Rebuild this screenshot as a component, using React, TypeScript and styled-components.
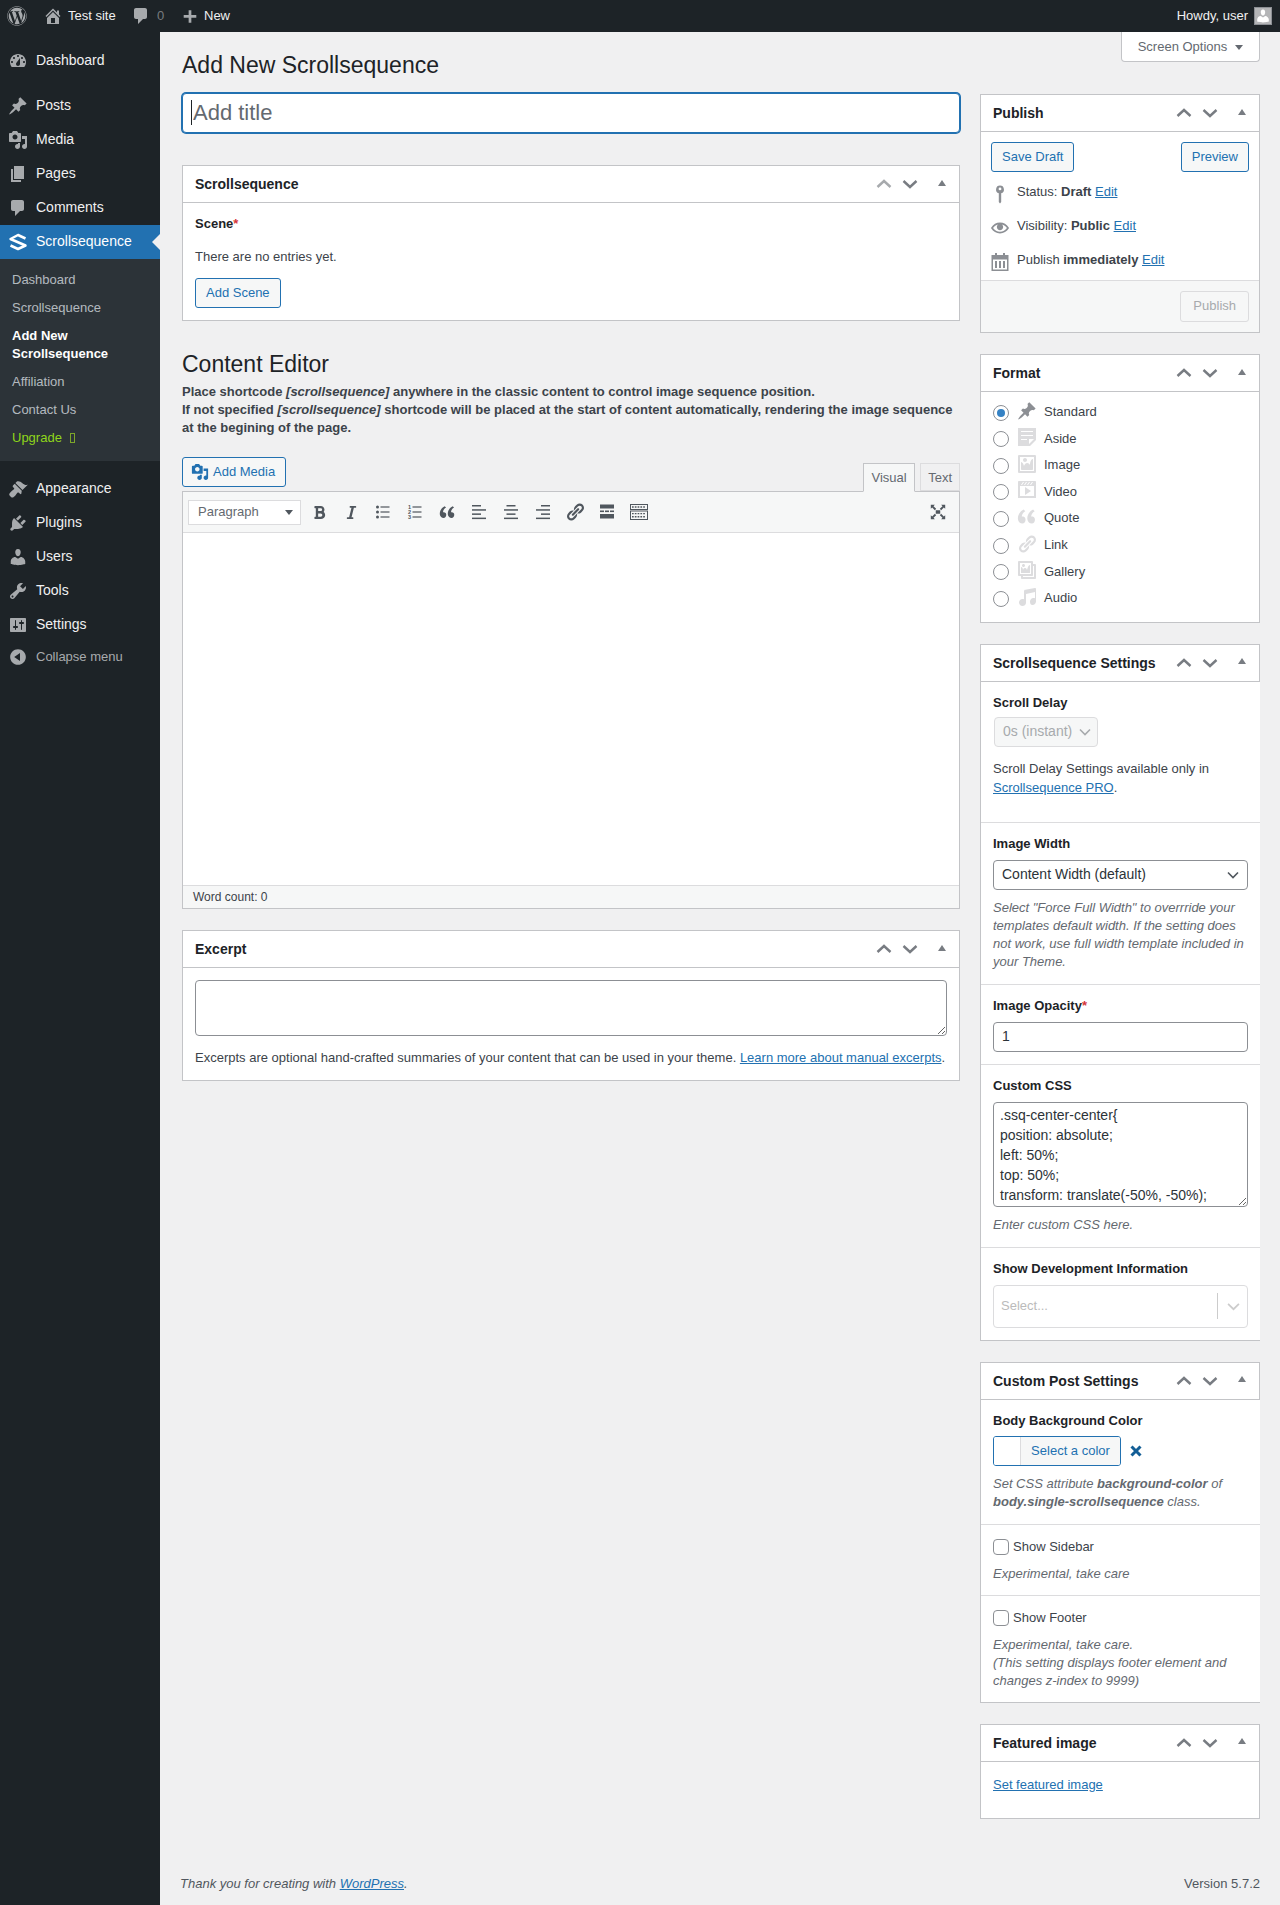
// App.tsx
import styled, { createGlobalStyle } from "styled-components";
import { FaWordpress, FaBold, FaItalic } from "react-icons/fa";

/* --------------------------
    TOKENS
--------------------------- */
const DARK = "#1d2327";
const SUBMENU = "#2c3338";
const BLUE = "#2271b1";
const LINK = "#2271b1";
const BORDER = "#c3c4c7";
const LIGHT = "#dcdcde";
const TEXT = "#3c434a";
const MUTED = "#646970";
const GREY = "#a7aaad";

/* --------------------------
    DASHICON PATHS
--------------------------- */
const ICONS: Record<string, string> = {
  dashboard:
    "M3.76 16h12.48c1.1-1.37 1.76-3.11 1.76-5 0-4.42-3.58-8-8-8s-8 3.58-8 8c0 1.89.66 3.63 1.76 5zM10 4c.55 0 1 .45 1 1s-.45 1-1 1-1-.45-1-1 .45-1 1-1zM6 6c.55 0 1 .45 1 1s-.45 1-1 1-1-.45-1-1 .45-1 1-1zm8 0c.55 0 1 .45 1 1s-.45 1-1 1-1-.45-1-1 .45-1 1-1zm-5.37 5.55L12 7v6c0 1.1-.9 2-2 2s-2-.9-2-2c0-.57.24-1.08.63-1.45zM4 10c.55 0 1 .45 1 1s-.45 1-1 1-1-.45-1-1 .45-1 1-1zm12 0c.55 0 1 .45 1 1s-.45 1-1 1-1-.45-1-1 .45-1 1-1z",
  pin: "M10.44 3.02l1.82-1.82 6.36 6.35-1.83 1.82c-1.05-.68-2.48-.57-3.41.36l-.75.75c-.92.93-1.04 2.35-.35 3.41l-1.83 1.82-2.41-2.41-2.8 2.79c-.42.42-3.38 2.71-3.8 2.29s1.86-3.39 2.28-3.81l2.79-2.79L4.1 9.36l1.83-1.82c1.05.69 2.48.57 3.4-.36l.75-.75c.93-.92 1.05-2.35.36-3.41z",
  media:
    "M13 11V4c0-.55-.45-1-1-1h-1.67L9 1H5L3.67 3H2c-.55 0-1 .45-1 1v7c0 .55.45 1 1 1h10c.55 0 1-.45 1-1zM7 4.5c1.38 0 2.5 1.12 2.5 2.5S8.38 9.5 7 9.5 4.5 8.38 4.5 7 5.62 4.5 7 4.5zM14 6h5v10.5c0 1.38-1.12 2.5-2.5 2.5S14 17.88 14 16.5s1.12-2.5 2.5-2.5c.17 0 .34.02.5.05V9h-3V6zm-4 8.05V13h2v3.5c0 1.38-1.12 2.5-2.5 2.5S7 17.88 7 16.5 8.12 14 9.5 14c.17 0 .34.02.5.05z",
  page: "M6 15V2h10v13H6zm-1 1h8v2H3V5h2v11z",
  comment:
    "M5 2h9c1.1 0 2 .9 2 2v7c0 1.1-.9 2-2 2h-2l-5 5v-5H5c-1.1 0-2-.9-2-2V4c0-1.1.9-2 2-2z",
  appearance:
    "M14.48 11.06L7.41 3.99l1.5-1.5c.5-.56 2.3-.47 3.51.32 1.21.8 1.43 1.28 2.91 2.1 1.18.64 2.45 1.26 4.45.85zm-.71.71L6.7 4.7 4.93 6.47c-.39.39-.39 1.02 0 1.41l1.06 1.06c.39.39.39 1.03 0 1.42-.6.6-1.43 1.11-2.21 1.69-.35.26-.7.53-1.01.84-1.35 1.34-2.38 2.51-.73 4.16l.71.71c1.65 1.65 2.82.62 4.17-.73.31-.31.58-.66.84-1.01.58-.78 1.09-1.61 1.69-2.21.39-.39 1.03-.39 1.42 0l1.06 1.06c.39.39 1.02.39 1.41 0z",
  plugins:
    "M13.11 4.36L9.87 7.6 8 5.73l3.24-3.24c.35-.34 1.05-.2 1.56.32.52.51.66 1.21.31 1.55zm-8 1.77l.91-1.12 9.01 9.01-1.19.84c-.71.71-2.63 1.16-3.82 1.16H6.14L4.9 17.26c-.59.59-1.54.59-2.12 0-.59-.58-.59-1.53 0-2.12l1.24-1.24v-3.88c0-1.13.4-3.19 1.09-3.89zm7.26 3.97l3.24-3.24c.34-.35 1.04-.21 1.55.31.52.51.66 1.21.31 1.55l-3.24 3.25z",
  users:
    "M10 9.25c-2.27 0-2.73-3.44-2.73-3.44C7 4.02 7.82 2 9.97 2c2.16 0 2.98 2.02 2.71 3.81 0 0-.41 3.44-2.68 3.44zm0 2.57L12.72 10c2.39 0 4.52 2.33 4.52 4.53v2.49s-3.65 1.13-7.24 1.13c-3.65 0-7.24-1.13-7.24-1.13v-2.49c0-2.25 1.94-4.48 4.47-4.48z",
  tools:
    "M16.68 9.77c-1.34 1.34-3.3 1.67-4.95.99l-5.41 6.52c-.99.99-2.59.99-3.58 0s-.99-2.59 0-3.57l6.52-5.42c-.68-1.65-.35-3.61.99-4.95 1.28-1.28 3.12-1.62 4.72-1.06l-2.89 2.89 2.82 2.82 2.86-2.87c.53 1.58.18 3.39-1.08 4.65zM3.81 16.21c.4.39 1.04.39 1.43 0 .4-.4.4-1.04 0-1.43-.39-.4-1.03-.4-1.43 0-.39.39-.39 1.03 0 1.43z",
  settings:
    "M18 16V4c0-.55-.45-1-1-1H3c-.55 0-1 .45-1 1v12c0 .55.45 1 1 1h14c.55 0 1-.45 1-1zM8 11h1c.55 0 1 .45 1 1s-.45 1-1 1H8v1.5c0 .28-.22.5-.5.5s-.5-.22-.5-.5V13H6c-.55 0-1-.45-1-1s.45-1 1-1h1V5.5c0-.28.22-.5.5-.5s.5.22.5.5V11zm5-2h-1c-.55 0-1-.45-1-1s.45-1 1-1h1V5.5c0-.28.22-.5.5-.5s.5.22.5.5V7h1c.55 0 1 .45 1 1s-.45 1-1 1h-1v5.5c0 .28-.22.5-.5.5s-.5-.22-.5-.5V9z",
  collapse:
    "M10 2.16c4.33 0 7.84 3.51 7.84 7.84s-3.51 7.84-7.84 7.84S2.16 14.33 2.16 10 5.71 2.16 10 2.16zm2 11.72V6.12L6.18 9.97z",
  home: "M16 8.5l1.53 1.53-1.06 1.06L10 4.62l-6.47 6.47-1.06-1.06L10 2.5l4 4v-2h2v4zm-6-2.46l6 5.99V18H4v-5.97zM12 17v-5H8v5h4z",
  plus: "M17 9v3h-5.5v5.5h-3V12H3V9h5.5V3.5h3V9z",
  aside:
    "M1 1h18v12l-6 6H1V1zm3 3v1h12V4H4zm0 4v1h12V8H4zm6 5v-1H4v1h6zm2 4l5-5h-5v5z",
  image:
    "M2.25 1h15.5c.69 0 1.25.56 1.25 1.25v15.5c0 .69-.56 1.25-1.25 1.25H2.25C1.56 19 1 18.44 1 17.75V2.25C1 1.56 1.56 1 2.25 1zM17 17V3H3v14h14zM10 6c0-1.1-.9-2-2-2s-2 .9-2 2 .9 2 2 2 2-.9 2-2zm3 5s0-6 3-6v10c0 .55-.45 1-1 1H5c-.55 0-1-.45-1-1V8c2 0 3 4 3 4s1-3 3-3 3 2 3 2z",
  video:
    "M2 1h16c.55 0 1 .45 1 1v16l-18-.02V2c0-.55.45-1 1-1zm4 1L4 5h1l2-3H6zm4 0H9L7 5h1zm3 0h-1l-2 3h1zm3 0h-1l-2 3h1zm1 14V6H3v10h14zM8 7l6 4-6 4V7z",
  quote:
    "M8.54 12.74c0-.87-.24-1.61-.72-2.22-.73-.92-2.14-1.03-2.96-.85-.34-1.93 1.3-4.39 3.42-5.45L6.65 2.5C3.45 4.03.12 8.22 1.11 12.9c.36 1.71 1.96 3.6 4.34 3.6 1.75 0 3.09-1.7 3.09-3.76zm9.41 0c0-.87-.24-1.61-.72-2.22-.73-.92-2.14-1.03-2.96-.85-.34-1.93 1.3-4.39 3.42-5.45L16.06 2.5c-3.2 1.53-6.53 5.72-5.54 10.4.36 1.71 1.96 3.6 4.34 3.6 1.75 0 3.09-1.7 3.09-3.76z",
  link: "M17.74 2.76c1.68 1.69 1.68 4.41 0 6.1l-1.53 1.52c-1.12 1.12-2.7 1.47-4.14 1.09l2.62-2.61.76-.77.76-.76c.84-.84.84-2.2 0-3.04-.84-.85-2.2-.85-3.04 0l-.77.76-3.38 3.38c-.37-1.44-.02-3.02 1.1-4.14l1.52-1.53c1.69-1.68 4.42-1.68 6.1 0zM8.59 13.43l5.34-5.34c.42-.42.42-1.1 0-1.52-.44-.43-1.13-.39-1.53 0l-5.33 5.34c-.42.42-.42 1.1 0 1.52.44.43 1.13.39 1.52 0zm-.76 2.29l4.14-4.15c.38 1.44.03 3.02-1.09 4.14l-1.52 1.53c-1.69 1.68-4.41 1.68-6.1 0-1.68-1.68-1.68-4.42 0-6.1l1.53-1.52c1.12-1.12 2.7-1.47 4.14-1.1l-4.14 4.15c-.85.84-.85 2.2 0 3.05.84.84 2.2.84 3.04 0z",
  gallery:
    "M16 4h1.96c.57 0 1.04.47 1.04 1.04v12.92c0 .57-.47 1.04-1.04 1.04H5.04C4.47 19 4 18.53 4 17.96V16H2.04C1.47 16 1 15.53 1 14.96V2.04C1 1.47 1.47 1 2.04 1h12.92c.57 0 1.04.47 1.04 1.04V4zM3 14h11V3H3v11zm5-8.5C8 4.67 7.33 4 6.5 4S5 4.67 5 5.5 5.67 7 6.5 7 8 6.33 8 5.5zm2 4.5s1-5 3-5v8H4V7c2 0 2 3 2 3s.33-2 2-2 2 2 2 2zm7 7V6h-1v8.96c0 .57-.47 1.04-1.04 1.04H6v1h11z",
  audio:
    "M6.99 3.08l11.02-2c.55-.08.99.45.99 1V14.5c0 1.94-1.57 3.5-3.5 3.5S13 16.44 13 14.5c0-1.93 1.57-3.5 3.5-3.5.54 0 1.04.13 1.5.35V5.08l-9 2V16c-.24 1.7-1.74 3-3.5 3C3.57 19 2 17.44 2 15.5 2 13.57 3.57 12 5.5 12c.54 0 1.04.13 1.5.35V4.08c0-.55.44-.91.99-1z",
  eye: "M19.7 9.4C17.7 6 14 3.9 10 3.9S2.3 6 .3 9.4L0 10l.3.6c2 3.4 5.7 5.5 9.7 5.5s7.7-2.1 9.7-5.5l.3-.6-.3-.6zM10 14.1c-3.1 0-6-1.6-7.7-4.1C3.6 8 5.7 6.6 8 6.1c-.9.6-1.5 1.7-1.5 2.9 0 1.9 1.6 3.5 3.5 3.5s3.5-1.6 3.5-3.5c0-1.2-.6-2.3-1.5-2.9 2.3.5 4.4 1.9 5.7 3.9-1.7 2.5-4.6 4.1-7.7 4.1z",
  key: "M10 1.5a4 4 0 0 1 1.2 7.8V18l-1.2 1.5L8.8 18V9.3A4 4 0 0 1 10 1.5zm0 2a1.4 1.4 0 1 0 0 2.8 1.4 1.4 0 0 0 0-2.8z",
  calendar:
    "M5 1h2v2h6V1h2v2h3.5v16h-17V3H5V1zM3 7.5V17.5h14V7.5H3zm2 1.5h2v7H5V9zm4 0h2v7H9V9zm4 0h2v7h-2V9z",
  fullscreen:
    "M2 2h4.5L5 3.5 8 6.5 6.5 8 3.5 5 2 6.5V2zm16 0v4.5L16.5 5l-3 3L12 6.5l3-3L13.5 2H18zM2 18v-4.5L3.5 15l3-3L8 13.5l-3 3L6.5 18H2zm16 0h-4.5l1.5-1.5-3-3 1.5-1.5 3 3 1.5-1.5V18zM7.5 8h5v4h-5z",
};

/* --------------------------
    GLOBAL
--------------------------- */
const Global = createGlobalStyle`
  html, body { margin: 0; padding: 0; background: #f0f0f1; }
  body {
    font-family: "Liberation Sans", Arial, sans-serif;
    font-size: 13px;
    line-height: 1.4;
    color: ${TEXT};
  }
  * { box-sizing: border-box; }
`;

/* --------------------------
    ADMIN BAR
--------------------------- */
const AdminBar = styled.header`
  height: 32px;
  background: ${DARK};
  display: flex;
  align-items: center;
  justify-content: space-between;
  color: #f0f0f1;
`;

const BarGroup = styled.div`
  display: flex;
  align-items: center;
`;

const BarLogo = styled.span`
  width: 42.5px;
  padding-left: 7px;
  display: flex;
`;

const BarItem = styled.span<{ $w?: number }>`
  display: inline-flex;
  align-items: center;
  gap: 5.5px;
  width: ${(p) => (p.$w ? `${p.$w}px` : "auto")};
  color: #f0f0f1;
  svg { color: ${GREY}; flex: none; }
`;

const BarCount = styled.span`
  color: ${GREY};
  opacity: 0.65;
  margin-left: 1px;
`;

const Avatar = styled.span`
  width: 18px;
  height: 18px;
  margin: 0 8px 0 6px;
  background: #b4b5b7;
  display: inline-flex;
  align-items: flex-end;
  justify-content: center;
  overflow: hidden;
  border: 1px solid #8c8f94;
  svg { color: #fff; display: block; }
`;

const Icon = styled.svg`
  fill: currentColor;
  display: block;
  flex: none;
`;

function Dash({ name, size = 20 }: { name: string; size?: number }) {
  return (
    <Icon width={size} height={size} viewBox="0 0 20 20" aria-hidden>
      <path d={ICONS[name]} fillRule="evenodd" />
    </Icon>
  );
}

/* --------------------------
    SIDEBAR
--------------------------- */
const Shell = styled.div`
  display: flex;
  align-items: stretch;
  height: 1873px;
`;

const Sidebar = styled.nav`
  width: 160px;
  flex: none;
  background: ${DARK};
  padding-top: 12px;
`;

const MenuRow = styled.div<{ $active?: boolean }>`
  position: relative;
  height: 34px;
  display: flex;
  align-items: center;
  gap: 8px;
  padding-left: 8px;
  font-size: 14px;
  color: ${(p) => (p.$active ? "#fff" : "#f0f0f1")};
  background: ${(p) => (p.$active ? BLUE : "transparent")};
  svg { color: ${(p) => (p.$active ? "#fff" : GREY)}; }
`;

const ActiveArrow = styled.span`
  position: absolute;
  right: 0;
  top: 9px;
  border: 8px solid transparent;
  border-right-color: #f0f0f1;
  border-left-width: 0;
`;

const MenuGap = styled.div`
  height: 11px;
`;

const SubMenu = styled.div`
  background: ${SUBMENU};
  padding: 7px 0 9px;
`;

const SubItem = styled.div<{ $current?: boolean; $accent?: boolean }>`
  padding: 5px 12px;
  min-height: 28px;
  line-height: 18px;
  font-size: 13px;
  font-weight: ${(p) => (p.$current ? 700 : 400)};
  color: ${(p) =>
    p.$accent ? "#8fd61a" : p.$current ? "#fff" : "rgba(240,246,252,.7)"};
`;

const Tofu = styled.span`
  display: inline-block;
  width: 5px;
  height: 10px;
  margin-left: 8px;
  border: 1px solid #7da62a;
  vertical-align: -1px;
`;

const CollapseRow = styled.div`
  height: 30px;
  display: flex;
  align-items: center;
  gap: 8px;
  padding-left: 8px;
  color: ${GREY};
  font-size: 13px;
`;

/* --------------------------
    CONTENT
--------------------------- */
const Content = styled.main`
  position: relative;
  flex: 1;
  min-width: 0;
  padding: 19px 20px 0 22px;
  display: flex;
  flex-direction: column;
`;

const ScreenTab = styled.div`
  position: absolute;
  top: 0;
  right: 20px;
  width: 139px;
  height: 30px;
  padding-top: 1px;
  background: #fff;
  border: 1px solid ${BORDER};
  border-top: 0;
  border-radius: 0 0 4px 4px;
  display: flex;
  align-items: center;
  justify-content: center;
  gap: 8px;
  color: ${MUTED};
`;

const DownCaret = styled.span`
  border: 4px solid transparent;
  border-top: 5px solid ${MUTED};
  border-bottom: 0;
`;

const PageTitle = styled.h1`
  margin: 0 0 13px;
  font-size: 23px;
  line-height: 29px;
  font-weight: 400;
  color: ${DARK};
`;

const Columns = styled.div`
  display: grid;
  grid-template-columns: 778px 280px;
  column-gap: 20px;
  align-items: start;
`;

const MainCol = styled.div`
  display: flex;
  flex-direction: column;
`;

const SideCol = styled.aside`
  display: flex;
  flex-direction: column;
  gap: 21px;
  padding-top: 1px;
`;

const TitleWrap = styled.div`
  position: relative;
  margin-bottom: 32px;
`;

const TitleInput = styled.input`
  display: block;
  width: 100%;
  height: 40px;
  padding: 3px 10px;
  border: 1px solid ${BLUE};
  box-shadow: 0 0 0 1px ${BLUE};
  border-radius: 4px;
  background: #fff;
  font: 22px "Liberation Sans", Arial, sans-serif;
  outline: none;
  &::placeholder { color: ${MUTED}; opacity: 1; }
`;

const Caret = styled.span`
  position: absolute;
  left: 9px;
  top: 7px;
  width: 1px;
  height: 25px;
  background: ${DARK};
`;

/* --------------------------
    META BOX
--------------------------- */
const Box = styled.section`
  background: #fff;
  border: 1px solid ${BORDER};
`;

const SpacedBox = styled(Box)`
  margin-top: 21px;
`;

const BoxHead = styled.div`
  height: 37px;
  padding-left: 12px;
  display: flex;
  align-items: center;
  justify-content: space-between;
  border-bottom: 1px solid ${BORDER};
`;

const BoxTitle = styled.h2`
  margin: 0;
  font-size: 14px;
  line-height: 18px;
  font-weight: 700;
  color: ${DARK};
`;

const Handles = styled.div`
  display: flex;
  align-items: center;
  height: 36px;
`;

const Chevron = styled.svg<{ $light?: boolean }>`
  display: block;
  fill: none;
  stroke: ${(p) => (p.$light ? GREY : "#787c82")};
  stroke-width: 2.4;
`;

const HandleSlot = styled.span<{ $w: number }>`
  width: ${(p) => p.$w}px;
  display: flex;
  justify-content: center;
`;

const ToggleTri = styled.span`
  border: 4px solid transparent;
  border-bottom: 6px solid #787c82;
  border-top: 0;
  margin-top: -3px;
`;

function BoxHandles({ upLight }: { upLight?: boolean }) {
  return (
    <Handles>
      <HandleSlot $w={22}>
        <Chevron $light={upLight} width="16" height="10" viewBox="0 0 16 10">
          <path d="M1.5 8 8 2l6.5 6" />
        </Chevron>
      </HandleSlot>
      <HandleSlot $w={30}>
        <Chevron width="16" height="10" viewBox="0 0 16 10">
          <path d="M1.5 2 8 8l6.5-6" />
        </Chevron>
      </HandleSlot>
      <HandleSlot $w={34}>
        <ToggleTri />
      </HandleSlot>
    </Handles>
  );
}

function Head({ title, upLight }: { title: string; upLight?: boolean }) {
  return (
    <BoxHead>
      <BoxTitle>{title}</BoxTitle>
      <BoxHandles upLight={upLight} />
    </BoxHead>
  );
}

const Button = styled.span`
  display: inline-flex;
  align-items: center;
  justify-content: center;
  gap: 4px;
  height: 30px;
  padding: 0 10px;
  border: 1px solid ${BLUE};
  border-radius: 3px;
  background: #f6f7f7;
  color: ${BLUE};
  font-size: 13px;
`;

const PublishButton = styled(Button)`
  height: 31px;
  padding: 0 12px;
  border-color: ${LIGHT};
  color: ${GREY};
`;

const Link = styled.a`
  color: ${LINK};
  text-decoration: underline;
`;

const Req = styled.span`
  color: #d63638;
`;

const ScenePad = styled.div`
  padding: 12px;
`;

const SceneLabel = styled.div`
  font-weight: 700;
  line-height: 18px;
  color: ${DARK};
`;

const EmptyNote = styled.p`
  margin: 15px 0 12px;
  line-height: 18px;
`;

/* --------------------------
    EDITOR
--------------------------- */
const EditorHeading = styled.h2`
  margin: 29px 0 4px;
  font-size: 23px;
  line-height: 29px;
  font-weight: 400;
  color: ${DARK};
`;

const Instructions = styled.p`
  margin: 0 0 20px;
  line-height: 18px;
  font-weight: 700;
`;

const TabRow = styled.div`
  height: 35px;
  display: flex;
  justify-content: space-between;
  align-items: flex-start;
  margin-bottom: -1px;
`;

const TabGroup = styled.div`
  display: flex;
  gap: 5px;
  padding-top: 6px;
`;

const EditorTab = styled.span<{ $on?: boolean }>`
  position: relative;
  height: ${(p) => (p.$on ? 29 : 28)}px;
  padding: 0 ${(p) => (p.$on ? 7.5 : 7)}px;
  border: 1px solid ${(p) => (p.$on ? BORDER : LIGHT)};
  border-bottom-color: ${(p) => (p.$on ? "#f6f7f7" : LIGHT)};
  background: ${(p) => (p.$on ? "#f6f7f7" : "#f0f0f1")};
  color: ${MUTED};
  line-height: 27px;
  z-index: 1;
`;

const Editor = styled.div`
  border: 1px solid ${BORDER};
  display: flex;
  flex-direction: column;
`;

const Toolbar = styled.div`
  height: 41px;
  background: #f6f7f7;
  border-bottom: 1px solid ${LIGHT};
  display: flex;
  align-items: center;
  padding: 0 5px;
`;

const FormatSelect = styled.div`
  width: 113px;
  height: 25px;
  margin-right: 2px;
  padding: 0 7px 0 9px;
  background: #fff;
  border: 1px solid ${LIGHT};
  display: flex;
  align-items: center;
  justify-content: space-between;
  color: ${MUTED};
`;

const SelectCaret = styled.span`
  border: 4px solid transparent;
  border-top: 5px solid #50575e;
  border-bottom: 0;
`;

const ToolButton = styled.span<{ $push?: boolean }>`
  width: 32px;
  height: 30px;
  flex: none;
  display: flex;
  align-items: center;
  justify-content: center;
  color: #50575e;
  margin-left: ${(p) => (p.$push ? "auto" : 0)};
  svg { display: block; }
`;

const EditArea = styled.div`
  height: 352px;
  background: #fff;
`;

const WordCount = styled.div`
  height: 23px;
  padding: 0 10px;
  background: #f6f7f7;
  border-top: 1px solid ${LIGHT};
  font-size: 12px;
  line-height: 22px;
  color: ${TEXT};
`;

const ExcerptBody = styled.div`
  padding: 12px 12px 13px;
`;

const ExcerptArea = styled.textarea`
  display: block;
  width: 100%;
  height: 56px;
  border: 1px solid #8c8f94;
  border-radius: 4px;
  background: #fff;
  outline: none;
`;

const ExcerptNote = styled.p`
  margin: 13px 0 0;
  line-height: 18px;
`;

/* --------------------------
    PUBLISH
--------------------------- */
const ActionRow = styled.div`
  display: flex;
  justify-content: space-between;
  padding: 10px 10px 3px;
`;

const StatusRow = styled.div`
  height: 34px;
  padding: 1px 0 0 10px;
  display: flex;
  align-items: center;
  gap: 8px;
  svg { color: #8c8f94; }
`;

const StatusIcon = styled.span`
  width: 18px;
  display: flex;
  justify-content: center;
  margin-top: 2px;
`;

const PublishFoot = styled.div`
  margin-top: 3px;
  padding: 10px;
  border-top: 1px solid ${LIGHT};
  background: #f6f7f7;
  display: flex;
  justify-content: flex-end;
`;

/* --------------------------
    FORMAT
--------------------------- */
const FormatList = styled.div`
  padding: 7px 12px 10.4px;
`;

const FormatRow = styled.label`
  height: 26.57px;
  display: flex;
  align-items: center;
`;

const Radio = styled.span<{ $on?: boolean }>`
  width: 16px;
  height: 16px;
  flex: none;
  border: 1px solid #8c8f94;
  border-radius: 50%;
  background: #fff;
  display: flex;
  align-items: center;
  justify-content: center;
  margin-top: 1px;
  &::after {
    content: "";
    width: 8px;
    height: 8px;
    border-radius: 50%;
    background: ${(p) => (p.$on ? "#3582c4" : "transparent")};
  }
`;

const FormatIcon = styled.span<{ $on?: boolean }>`
  width: 20px;
  margin: -3px 7px 0 8px;
  color: ${(p) => (p.$on ? "#8c8f94" : LIGHT)};
`;

const FORMATS: [string, string][] = [
  ["Standard", "pin"],
  ["Aside", "aside"],
  ["Image", "image"],
  ["Video", "video"],
  ["Quote", "quote"],
  ["Link", "link"],
  ["Gallery", "gallery"],
  ["Audio", "audio"],
];

/* --------------------------
    ACF FIELDS
--------------------------- */
const FieldBody = styled.div`
  margin-right: -1px;
  background: #fff;
`;

const Field = styled.div<{ $last?: boolean }>`
  padding: 12px;
  border-bottom: ${(p) => (p.$last ? 0 : `1px solid ${LIGHT}`)};
`;

const FieldLabel = styled.div`
  font-weight: 700;
  line-height: 18px;
  color: ${DARK};
  margin-bottom: 7px;
`;

const DelaySelect = styled.div`
  width: 104px;
  height: 30px;
  margin: -2px 0 0 1px;
  padding: 0 6px 0 8px;
  background: #f6f7f7;
  border: 1px solid ${LIGHT};
  border-radius: 4px;
  display: flex;
  align-items: center;
  justify-content: space-between;
  color: ${GREY};
  font-size: 14px;
`;

const DelayNote = styled.p`
  margin: 12px 0 12px;
  line-height: 19.5px;
`;

const FieldSelect = styled.div`
  height: 30px;
  padding: 0 8px;
  background: #fff;
  border: 1px solid #8c8f94;
  border-radius: 4px;
  display: flex;
  align-items: center;
  justify-content: space-between;
  font-size: 14px;
  color: #2c3338;
`;

const Hint = styled.p`
  margin: 9px 0 1px;
  line-height: 18px;
  font-style: italic;
  color: ${MUTED};
  b { font-weight: 700; }
`;

const NumberInput = styled.div`
  height: 30px;
  padding: 0 8px;
  background: #fff;
  border: 1px solid #8c8f94;
  border-radius: 4px;
  display: flex;
  align-items: center;
  font-size: 14px;
  color: #2c3338;
`;

const CssArea = styled.textarea`
  display: block;
  width: 100%;
  height: 105px;
  padding: 2px 6px;
  border: 1px solid #8c8f94;
  border-radius: 4px;
  background: #fff;
  font: 14px/20px "Liberation Sans", Arial, sans-serif;
  color: #2c3338;
  overflow: hidden;
  outline: none;
`;

const DevSelect = styled.div`
  height: 43px;
  padding: 0 7px;
  background: #fff;
  border: 1px solid ${LIGHT};
  border-radius: 4px;
  display: flex;
  align-items: center;
  justify-content: space-between;
  color: #bbb;
`;

const DevRight = styled.span`
  display: flex;
  align-items: center;
  gap: 9px;
`;

const DevBar = styled.span`
  width: 1px;
  height: 26px;
  background: #ccc;
`;

const PickerRow = styled.div`
  display: flex;
  align-items: center;
  gap: 9px;
  margin-top: -1px;
`;

const Picker = styled.div`
  width: 128px;
  height: 30px;
  border: 1px solid ${BLUE};
  border-radius: 3px;
  display: flex;
  overflow: hidden;
`;

const Swatch = styled.span`
  width: 27px;
  background: #fff;
  border-right: 1px solid ${LIGHT};
`;

const PickerText = styled.span`
  flex: 1;
  background: #f6f7f7;
  color: ${BLUE};
  display: flex;
  align-items: center;
  justify-content: center;
`;

const ClearX = styled.svg`
  display: block;
  fill: none;
  stroke: #135e96;
  stroke-width: 3;
`;

const CheckRow = styled.label`
  display: flex;
  align-items: center;
  gap: 4px;
  height: 21px;
  line-height: 18px;
`;

const Check = styled.span`
  width: 16px;
  height: 16px;
  border: 1px solid #8c8f94;
  border-radius: 4px;
  background: #fff;
`;

const CheckHint = styled.p`
  margin: 7px 0 0;
  line-height: 18px;
  font-style: italic;
  color: ${MUTED};
`;

const FeaturedBody = styled.div`
  padding: 13px 12px 24px;
  line-height: 19px;
`;

const Footer = styled.footer`
  margin-top: auto;
  height: 30px;
  display: flex;
  justify-content: space-between;
  margin-left: -2px;
  color: #50575e;
`;

const ThankYou = styled.span`
  font-style: italic;
`;

/* --------------------------
    SMALL DRAWINGS
--------------------------- */
const SmallChevron = ({ color = "#50575e", size = 12 }: { color?: string; size?: number }) => (
  <svg width={size} height={size} viewBox="0 0 12 12" fill="none" stroke={color} strokeWidth="1.6">
    <path d="M1 3.5 6 8.5l5-5" />
  </svg>
);

const ScrollLogo = () => (
  <svg width="20" height="20" viewBox="0 0 20 20" fill="none" stroke="currentColor" strokeWidth="2.5" strokeLinejoin="round">
    <path d="M17.5 6.5 10 3 2.5 7l15 6.5L10 17l-7.5-3.5" />
  </svg>
);

const ToolList = () => (
  <svg width="20" height="20" viewBox="0 0 20 20" fill="currentColor">
    <circle cx="4.5" cy="5" r="1.5" /><circle cx="4.5" cy="10" r="1.5" /><circle cx="4.5" cy="15" r="1.5" />
    <rect x="7.5" y="4.4" width="9" height="1.2" /><rect x="7.5" y="9.4" width="9" height="1.2" /><rect x="7.5" y="14.4" width="9" height="1.2" />
  </svg>
);

const ListDigits = styled.text`
  font: 700 5.5px "Liberation Sans", Arial, sans-serif;
`;

const ToolNumbered = () => (
  <svg width="20" height="20" viewBox="0 0 20 20" fill="currentColor">
    <ListDigits x="3" y="6.5">1</ListDigits>
    <ListDigits x="3" y="11.8">2</ListDigits>
    <ListDigits x="3" y="17">3</ListDigits>
    <rect x="7.5" y="4.4" width="9" height="1.2" /><rect x="7.5" y="9.4" width="9" height="1.2" /><rect x="7.5" y="14.4" width="9" height="1.2" />
  </svg>
);

const ToolAlign = ({ mode }: { mode: "left" | "center" | "right" }) => {
  const x = mode === "left" ? 3 : mode === "center" ? 5.5 : 8;
  return (
    <svg width="20" height="20" viewBox="0 0 20 20" fill="currentColor">
      <rect x={x} y="3" width="9" height="1.5" />
      <rect x="3" y="7.2" width="14" height="1.5" />
      <rect x={x} y="11.4" width="9" height="1.5" />
      <rect x="3" y="15.6" width="14" height="1.5" />
    </svg>
  );
};

const ToolMore = () => (
  <svg width="20" height="20" viewBox="0 0 20 20" fill="currentColor">
    <rect x="3" y="2.5" width="14" height="4" />
    <rect x="3" y="8.5" width="4" height="1.6" /><rect x="8" y="8.5" width="4" height="1.6" /><rect x="13" y="8.5" width="4" height="1.6" />
    <rect x="3" y="12" width="14" height="4.5" />
  </svg>
);

const ToolKitchen = () => (
  <svg width="20" height="20" viewBox="0 0 20 20" fill="none" stroke="currentColor">
    <rect x="1.5" y="2.5" width="17" height="5" strokeWidth="1" />
    <rect x="1.5" y="9" width="17" height="8.5" strokeWidth="1" />
    <path d="M3 5h14M3 11.6h14M3 14.8h14" strokeWidth="1.4" strokeDasharray="1.7 1.1" />
  </svg>
);

const AddMediaIcon = styled.span`
  color: ${BLUE};
  margin-left: -2px;
`;

/* --------------------------
    PAGE
--------------------------- */
export default function App() {
  return (
    <>
      <Global />
      <AdminBar>
        <BarGroup>
          <BarLogo>
            <FaWordpress size={20} color={GREY} />
          </BarLogo>
          <BarItem $w={88}>
            <Dash name="home" />
            Test site
          </BarItem>
          <BarItem $w={50}>
            <Dash name="comment" />
            <BarCount>0</BarCount>
          </BarItem>
          <BarItem>
            <Dash name="plus" size={18} />
            New
          </BarItem>
        </BarGroup>
        <BarGroup>
          <span>Howdy, user</span>
          <Avatar>
            <Dash name="users" size={16} />
          </Avatar>
        </BarGroup>
      </AdminBar>
      <Shell>
        <Sidebar>
          <MenuRow><Dash name="dashboard" />Dashboard</MenuRow>
          <MenuGap />
          <MenuRow><Dash name="pin" />Posts</MenuRow>
          <MenuRow><Dash name="media" />Media</MenuRow>
          <MenuRow><Dash name="page" />Pages</MenuRow>
          <MenuRow><Dash name="comment" />Comments</MenuRow>
          <MenuRow $active><ScrollLogo />Scrollsequence<ActiveArrow /></MenuRow>
          <SubMenu>
            <SubItem>Dashboard</SubItem>
            <SubItem>Scrollsequence</SubItem>
            <SubItem $current>Add New Scrollsequence</SubItem>
            <SubItem>Affiliation</SubItem>
            <SubItem>Contact Us</SubItem>
            <SubItem $accent>Upgrade<Tofu /></SubItem>
          </SubMenu>
          <MenuGap />
          <MenuRow><Dash name="appearance" />Appearance</MenuRow>
          <MenuRow><Dash name="plugins" />Plugins</MenuRow>
          <MenuRow><Dash name="users" />Users</MenuRow>
          <MenuRow><Dash name="tools" />Tools</MenuRow>
          <MenuRow><Dash name="settings" />Settings</MenuRow>
          <CollapseRow><Dash name="collapse" />Collapse menu</CollapseRow>
        </Sidebar>
        <Content>
          <ScreenTab>Screen Options<DownCaret /></ScreenTab>
          <PageTitle>Add New Scrollsequence</PageTitle>
          <Columns>
            <MainCol>
              <TitleWrap>
                <TitleInput placeholder="Add title" readOnly />
                <Caret />
              </TitleWrap>
              <Box>
                <Head title="Scrollsequence" upLight />
                <ScenePad>
                  <SceneLabel>Scene<Req>*</Req></SceneLabel>
                  <EmptyNote>There are no entries yet.</EmptyNote>
                  <Button>Add Scene</Button>
                </ScenePad>
              </Box>
              <EditorHeading>Content Editor</EditorHeading>
              <Instructions>
                Place shortcode <i>[scrollsequence]</i> anywhere in the classic content to control image sequence position.
                <br />
                If not specified <i>[scrollsequence]</i> shortcode will be placed at the start of content automatically, rendering the image sequence
                <br />
                at the begining of the page.
              </Instructions>
              <TabRow>
                <Button>
                  <AddMediaIcon><Dash name="media" size={18} /></AddMediaIcon>
                  Add Media
                </Button>
                <TabGroup>
                  <EditorTab $on>Visual</EditorTab>
                  <EditorTab>Text</EditorTab>
                </TabGroup>
              </TabRow>
              <Editor>
                <Toolbar>
                  <FormatSelect>Paragraph<SelectCaret /></FormatSelect>
                  <ToolButton><FaBold size={15} /></ToolButton>
                  <ToolButton><FaItalic size={15} /></ToolButton>
                  <ToolButton><ToolList /></ToolButton>
                  <ToolButton><ToolNumbered /></ToolButton>
                  <ToolButton><Dash name="quote" size={17} /></ToolButton>
                  <ToolButton><ToolAlign mode="left" /></ToolButton>
                  <ToolButton><ToolAlign mode="center" /></ToolButton>
                  <ToolButton><ToolAlign mode="right" /></ToolButton>
                  <ToolButton><Dash name="link" /></ToolButton>
                  <ToolButton><ToolMore /></ToolButton>
                  <ToolButton><ToolKitchen /></ToolButton>
                  <ToolButton $push><Dash name="fullscreen" size={18} /></ToolButton>
                </Toolbar>
                <EditArea />
                <WordCount>Word count: 0</WordCount>
              </Editor>
              <SpacedBox>
                <Head title="Excerpt" />
                <ExcerptBody>
                  <ExcerptArea readOnly />
                  <ExcerptNote>
                    Excerpts are optional hand-crafted summaries of your content that can be used in your theme.{" "}
                    <Link>Learn more about manual excerpts</Link>.
                  </ExcerptNote>
                </ExcerptBody>
              </SpacedBox>
            </MainCol>

            <SideCol>
              <Box>
                <Head title="Publish" />
                <ActionRow>
                  <Button>Save Draft</Button>
                  <Button>Preview</Button>
                </ActionRow>
                <StatusRow>
                  <StatusIcon><Dash name="key" size={20} /></StatusIcon>
                  <span>Status: <b>Draft</b> <Link>Edit</Link></span>
                </StatusRow>
                <StatusRow>
                  <StatusIcon><Dash name="eye" size={18} /></StatusIcon>
                  <span>Visibility: <b>Public</b> <Link>Edit</Link></span>
                </StatusRow>
                <StatusRow>
                  <StatusIcon><Dash name="calendar" size={20} /></StatusIcon>
                  <span>Publish <b>immediately</b> <Link>Edit</Link></span>
                </StatusRow>
                <PublishFoot>
                  <PublishButton>Publish</PublishButton>
                </PublishFoot>
              </Box>

              <Box>
                <Head title="Format" />
                <FormatList>
                  {FORMATS.map(([label, icon], i) => (
                    <FormatRow key={label}>
                      <Radio $on={i === 0} />
                      <FormatIcon $on={i === 0}><Dash name={icon} size={20} /></FormatIcon>
                      {label}
                    </FormatRow>
                  ))}
                </FormatList>
              </Box>

              <Box>
                <Head title="Scrollsequence Settings" />
                <FieldBody>
                  <Field>
                    <FieldLabel>Scroll Delay</FieldLabel>
                    <DelaySelect>0s (instant)<SmallChevron color={GREY} /></DelaySelect>
                    <DelayNote>
                      Scroll Delay Settings available only in
                      <br />
                      <Link>Scrollsequence PRO</Link>.
                    </DelayNote>
                  </Field>
                  <Field>
                    <FieldLabel>Image Width</FieldLabel>
                    <FieldSelect>Content Width (default)<SmallChevron /></FieldSelect>
                    <Hint>
                      Select "Force Full Width" to overrride your templates default width. If the setting does not work, use full width template included in your Theme.
                    </Hint>
                  </Field>
                  <Field>
                    <FieldLabel>Image Opacity<Req>*</Req></FieldLabel>
                    <NumberInput>1</NumberInput>
                  </Field>
                  <Field>
                    <FieldLabel>Custom CSS</FieldLabel>
                    <CssArea
                      readOnly
                      defaultValue={".ssq-center-center{\nposition: absolute;\nleft: 50%;\ntop: 50%;\ntransform: translate(-50%, -50%);\n}"}
                    />
                    <Hint>Enter custom CSS here.</Hint>
                  </Field>
                  <Field $last>
                    <FieldLabel>Show Development Information</FieldLabel>
                    <DevSelect>
                      Select...
                      <DevRight>
                        <DevBar />
                        <SmallChevron color="#ccc" size={13} />
                      </DevRight>
                    </DevSelect>
                  </Field>
                </FieldBody>
              </Box>

              <Box>
                <Head title="Custom Post Settings" />
                <FieldBody>
                  <Field>
                    <FieldLabel>Body Background Color</FieldLabel>
                    <PickerRow>
                      <Picker>
                        <Swatch />
                        <PickerText>Select a color</PickerText>
                      </Picker>
                      <ClearX width="12" height="12" viewBox="0 0 12 12">
                        <path d="M1.5 1.5l9 9M10.5 1.5l-9 9" />
                      </ClearX>
                    </PickerRow>
                    <Hint>
                      Set CSS attribute <b>background-color</b> of <b>body.single-scrollsequence</b> class.
                    </Hint>
                  </Field>
                  <Field>
                    <CheckRow><Check />Show Sidebar</CheckRow>
                    <CheckHint>Experimental, take care</CheckHint>
                  </Field>
                  <Field $last>
                    <CheckRow><Check />Show Footer</CheckRow>
                    <CheckHint>
                      Experimental, take care.
                      <br />
                      (This setting displays footer element and changes z-index to 9999)
                    </CheckHint>
                  </Field>
                </FieldBody>
              </Box>

              <Box>
                <Head title="Featured image" />
                <FeaturedBody><Link>Set featured image</Link></FeaturedBody>
              </Box>
            </SideCol>
          </Columns>
          <Footer>
            <ThankYou>Thank you for creating with <Link>WordPress</Link>.</ThankYou>
            <span>Version 5.7.2</span>
          </Footer>
        </Content>
      </Shell>
    </>
  );
}
